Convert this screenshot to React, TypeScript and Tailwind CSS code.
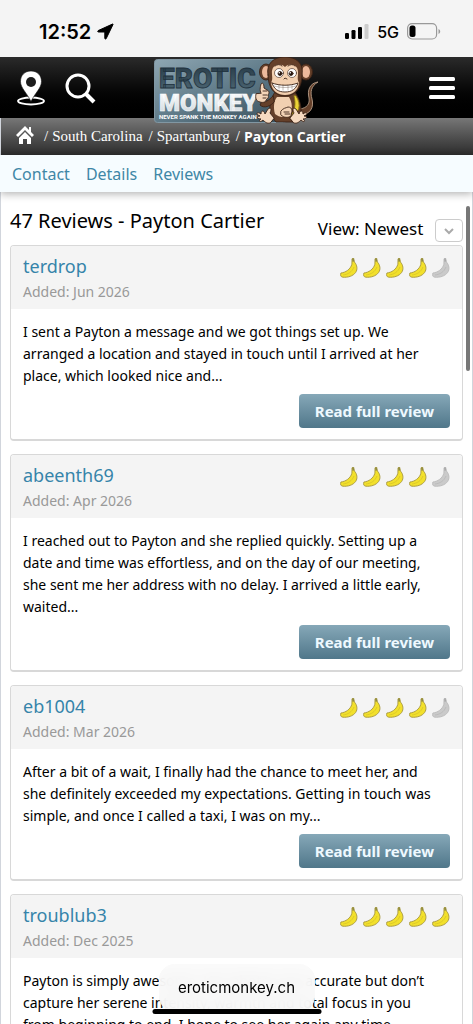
interface Review {
  author: string
  added: string
  rating: number
  text: string
}

const reviews: Review[] = [
  {
    author: "terdrop",
    added: "Jun 2026",
    rating: 4,
    text: "I sent a Payton a message and we got things set up. We arranged a location and stayed in touch until I arrived at her place, which looked nice and...",
  },
  {
    author: "abeenth69",
    added: "Apr 2026",
    rating: 4,
    text: "I reached out to Payton and she replied quickly. Setting up a date and time was effortless, and on the day of our meeting, she sent me her address with no delay. I arrived a little early, waited...",
  },
  {
    author: "eb1004",
    added: "Mar 2026",
    rating: 4,
    text: "After a bit of a wait, I finally had the chance to meet her, and she definitely exceeded my expectations. Getting in touch was simple, and once I called a taxi, I was on my...",
  },
  {
    author: "troublub3",
    added: "Dec 2025",
    rating: 5,
    text: "Payton is simply awesome. Her photos are accurate but don’t capture her serene intensity, warmth and total focus in you from beginning to end. I hope to see her again any time...",
  },
]

function StatusBar() {
  return (
    <div className="flex h-[57px] shrink-0 items-center justify-between bg-[#f4f4f4] pt-1.5 pr-8 pl-[39px] font-['Inter',sans-serif] text-black">
      <div className="flex items-center gap-1.5">
        <span className="text-xl font-semibold">12:52</span>
        <svg viewBox="0 0 17 17" className="size-[17px]" aria-hidden="true">
          <path d="M15.6 1 1.2 7.6c-.8.4-.6 1.4.3 1.4h6.3v6.3c0 .9 1 1.1 1.4.3L16 1.5c.2-.4 0-.7-.4-.5z" stroke="#000" strokeLinejoin="round" />
        </svg>
      </div>
      <div className="flex items-center gap-2">
        <svg viewBox="0 0 24 16" className="h-4 w-6" aria-hidden="true">
          <rect x="0" y="9" width="4" height="6" rx="1.2" />
          <rect x="6.500" y="6" width="4" height="9" rx="1.2" />
          <rect x="13" y="3" width="4" height="12" rx="1.2" />
          <rect x="19.500" y="0" width="4" height="15" rx="1.2" fill="#ccc" />
        </svg>
        <span className="text-base font-medium">5G</span>
        <svg viewBox="0 0 34 17" className="h-[17px] w-[34px]" aria-hidden="true">
          <rect x=".6" y=".6" width="29" height="15.400" rx="4.500" fill="none" stroke="#999" strokeWidth="1.200" />
          <rect x="2.500" y="2.600" width="6" height="11.400" rx="2.500" />
          <path d="M31.500 6v5c1-.4 1.700-1.400 1.700-2.500S32.500 6.400 31.500 6z" fill="#999" />
        </svg>
      </div>
    </div>
  )
}

function Logo() {
  return (
    <svg viewBox="0 0 169 68" className="h-[68px] w-[169px]" role="img" aria-label="Erotic Monkey">
      <defs>
        <linearGradient id="plate" x1="0" y1="0" x2="1" y2="1">
          <stop offset="0" stopColor="#8fa7b3" />
          <stop offset=".5" stopColor="#607b89" />
          <stop offset="1" stopColor="#374d59" />
        </linearGradient>
        <linearGradient id="dark" x1="0" y1="0" x2="0" y2="1">
          <stop offset="0" stopColor="#243743" />
          <stop offset="1" stopColor="#526c7a" />
        </linearGradient>
        <linearGradient id="light" x1="0" y1="0" x2="0" y2="1">
          <stop offset="0" stopColor="#ffffff" />
          <stop offset="1" stopColor="#ccd6dc" />
        </linearGradient>
      </defs>
      <rect x="1.500" y="2.500" width="132" height="63" rx="3" fill="url(#plate)" stroke="#8197a3" />
      <g fontFamily="Roboto, sans-serif" fontWeight="900">
        <text x="6" y="31" fontSize="28" fill="url(#dark)" stroke="#1f323e" strokeWidth=".8">EROTIC</text>
        <text x="6" y="54" fontSize="24" fill="url(#light)" stroke="#fff" strokeWidth=".5">MONKEY</text>
        <text x="6" y="62" fontSize="6" fontWeight="700" fill="#fff">NEVER SPANK THE MONKEY AGAIN</text>
      </g>
      <g stroke="#3b2216" strokeWidth=".9" strokeLinejoin="round" strokeLinecap="round">
        {/* tail */}
        <path d="M146 58c12 0 15-8 13-16-2-7-1-13 6-17-8 1-11 8-9 16 1 6-2 10-9 11z" fill="#65402a" stroke="#b79d88" />
        {/* body and arms */}
        <path d="M122 35c-4 6-7 15-4 24l5 6h17l8-7c1-9-2-18-7-24z" fill="#65402a" />
        <path d="M124 40c-3 4-4 10-2 17 5 4 10 4 15 0 3-6 2-12-1-17z" fill="#f1d0b1" stroke="none" />
        <path d="M120 39c-5 5-8 7-11 5l-2 4c4 4 11 1 14-3z" fill="#65402a" />
        <path d="M108 36c-2-2 0-9 0-9 2-2 3 0 3 4l3 2c3 1 2 4 1 5 1 2 0 4-2 5 0 2-3 3-6 2-4-1-5-4-4-8z" fill="#f3d4b8" />
        <path d="M110 34h4m-4 4h4m-4 3h3" fill="none" />
        {/* banana in hand */}
        <path d="M143 39c6 9 3 18-5 20 4-6 5-12 3-20z" fill="#ecd336" stroke="#8b7716" />
        <path d="M128 54c2-3 5-3 7-4 2 0 4 1 4 4l-1 5c-3 2-7 2-10-1z" fill="#f3d4b8" />
        <path d="M131 55h5m-4 2h5" />
        {/* feet */}
        <path d="M117 66c-3 1-5-1-7-3-3 3-5 1-2-1-4 0-5-3-1-3-5-2-3-5 1-2 0-4 3-4 4 0l3-5c3-2 4 0 2 4l4 5z" fill="#f6dac1" />
        <path d="M141 66c3 1 5-1 7-3 3 3 5 1 2-1 4 0 5-3 1-3 5-2 3-5-1-2 0-4-3-4-4 0l-3-5c-3-2-4 0-2 4l-4 5z" fill="#f6dac1" />
        {/* ears */}
        <ellipse cx="113" cy="15" rx="6.500" ry="8" fill="#65402a" />
        <ellipse cx="113" cy="15" rx="4" ry="6" fill="#edb99b" stroke="none" />
        <ellipse cx="153" cy="15" rx="6.500" ry="8" fill="#65402a" />
        <ellipse cx="153" cy="15" rx="4" ry="6" fill="#edb99b" stroke="none" />
        {/* head */}
        <path d="M115 18c-2-12 6-18 17-18s19 6 17 18c0 12-6 21-17 21s-17-9-17-21z" fill="#65402a" />
        <path d="M132 10c-6-5-14-2-13 7 0 3 1 5-1 9 1 8 7 12 14 12s13-4 14-12c-2-4-1-6-1-9 1-9-7-12-13-7z" fill="#f3d0b0" stroke="none" />
        <path d="M119 26c8 3 18 3 26 0-2 6-6 9-13 9s-11-3-13-9z" fill="#fff" />
        <path d="M121 29c7 2 15 2 22 0M126 28v4m4-4v5m5-5v5m4-5v4" fill="none" strokeWidth=".3" />
        <circle cx="126" cy="16" r="4.500" fill="#fff" strokeWidth=".6" />
        <circle cx="139" cy="16" r="4.500" fill="#fff" strokeWidth=".6" />
        <circle cx="127" cy="16.500" r="2" fill="#211511" />
        <circle cx="138" cy="16.500" r="2" fill="#211511" />
        <circle cx="126.300" cy="15.700" r=".8" fill="#fff" stroke="none" />
        <circle cx="137.300" cy="15.700" r=".8" fill="#fff" stroke="none" />
        <path d="M122 9q4-3 7 0m6 0q4-3 7 0m-11 13 1-1 2 1" fill="none" />
      </g>
    </svg>
  )
}

function Header() {
  return (
    <header className="relative flex h-[61px] shrink-0 items-center justify-between bg-linear-to-b from-[#2b2b2b] to-black px-4">
      <div className="flex items-center gap-[18px]">
        <button type="button" aria-label="Locations">
          <svg viewBox="0 0 30 36" className="h-9 w-[30px]">
            <ellipse cx="15" cy="31" rx="13" ry="3.500" fill="none" stroke="#fff" strokeWidth="1.800" />
            <path d="M15 31.500C11 23 4.500 18 4.500 11.500 4.500 5 9 1 15 1s10.500 4 10.500 10.500C25.500 18 19 23 15 31.500z" fill="#fff" stroke="#111" strokeWidth=".6" />
            <circle cx="15" cy="12" r="5" fill="#1c1c1c" />
          </svg>
        </button>
        <button type="button" aria-label="Search">
          <svg viewBox="0 0 32 32" className="size-8" fill="none" stroke="#fff">
            <circle cx="14" cy="14" r="11" strokeWidth="3" />
            <path d="m22 22 8 8" strokeWidth="4" />
          </svg>
        </button>
      </div>
      <a href="#home" className="absolute top-0 left-1/2 -ml-[84px]">
        <Logo />
      </a>
      <button type="button" aria-label="Menu" className="mr-0.5">
        <svg viewBox="0 0 26 24" className="h-6 w-[26px]" fill="#fff">
          <rect x="0" y="1" width="26" height="4" rx="1.500" />
          <rect x="0" y="10" width="26" height="4" rx="1.500" />
          <rect x="0" y="19" width="26" height="4" rx="1.500" />
        </svg>
      </button>
    </header>
  )
}

function Breadcrumb() {
  return (
    <nav className="flex h-[37px] shrink-0 items-center gap-1 border-l border-gray-300 bg-linear-to-b from-[#777] to-[#2d2d2d] pl-[15px] font-['Liberation_Serif',serif] text-[15px] text-white">
      <a href="#home" aria-label="Home" className="mr-1.5 mb-1">
        <svg viewBox="0 0 18 18" className="size-[18px]" fill="#fff">
          <path d="M9 0 0 9l2 2 7-7 7 7 2-2-3-3V1h-2v3z" />
          <path d="m9 6-6 6v6h4v-5h4v5h4v-6z" />
        </svg>
      </a>
      <span>/</span>
      <a href="#south-carolina">South Carolina</a>
      <span className="ml-0.5">/</span>
      <a href="#spartanburg">Spartanburg</a>
      <span className="ml-0.5">/</span>
      <span className="font-['Open_Sans',sans-serif] text-sm font-bold">Payton Cartier</span>
    </nav>
  )
}

function Tabs() {
  return (
    <nav className="relative flex h-[37px] shrink-0 items-center gap-4 bg-[#f6fcff] px-3 text-base text-[#3f87a6] shadow-[0_2px_8px_rgba(0,0,0,0.3)]">
      <a href="#contact">Contact</a>
      <a href="#details">Details</a>
      <a href="#reviews">Reviews</a>
    </nav>
  )
}

function Banana({ filled }: { filled: boolean }) {
  return (
    <svg viewBox="0 0 18 20" className="h-5 w-[18px]" aria-hidden="true">
      <path
        d="M12 .8 13.700.3l.7 3.700c2.800 3 3.400 7.500 1.200 10.500-2.500 3.500-7.600 5.200-12.800 4.700C.8 19 .1 17.500.9 15c4.600-.5 9.500-3.500 11-8.800z"
        fill={filled ? "#f2e02c" : "#cacaca"}
        stroke={filled ? "#a6963c" : "#bababa"}
        strokeWidth=".9"
        strokeLinejoin="round"
      />
      <path d="M3 17c5-.6 9-3 11-8" fill="none" stroke={filled ? "#d8c428" : "#b8b8b8"} strokeWidth=".8" />
      <path d="m12 .8 1.700-.5.5 3-1.600.7z" fill={filled ? "#8f8a44" : "#aaa"} />
    </svg>
  )
}

function ReviewCard({ review }: { review: Review }) {
  return (
    <article className="shrink-0 overflow-hidden rounded border border-b-2 border-[#d8d8d8] bg-white">
      <div className="flex h-[63px] items-start justify-between bg-[#f4f4f4] px-3 pt-[7px]">
        <div>
          <a href="#author" className="block text-lg leading-[26px] text-[#3684aa]">
            {review.author}
          </a>
          <p className="text-sm leading-[26px] text-[#999]">Added: {review.added}</p>
        </div>
        <div className="flex gap-[5px] pt-[5px]" role="img" aria-label={`${review.rating} out of 5`}>
          {[1, 2, 3, 4, 5].map((n) => (
            <Banana key={n} filled={n <= review.rating} />
          ))}
        </div>
      </div>
      <div className="px-3 pt-3 pb-[11px]">
        <p className="pr-2 text-sm leading-[22px]">{review.text}</p>
        <div className="mt-[7px] flex justify-end">
          <button
            type="button"
            className="h-[34px] rounded bg-linear-to-b from-[#86a8b8] to-[#50778a] px-4 text-[15px] font-bold text-[#eef9ff]"
          >
            Read full review
          </button>
        </div>
      </div>
    </article>
  )
}

export default function App() {
  return (
    <div className="relative flex h-screen flex-col overflow-hidden bg-white font-['Noto_Sans',sans-serif] text-black">
      <StatusBar />
      <Header />
      <Breadcrumb />
      <Tabs />
      <main className="flex min-h-0 flex-1 flex-col gap-[13px] overflow-hidden border-x border-gray-300 px-[9px]">
        <div className="-mb-[13px] flex h-[53px] shrink-0 items-start justify-between pt-3.5">
          <h1 className="text-xl leading-[30px]">47 Reviews - Payton Cartier</h1>
          <div className="flex items-center pt-[11px] text-[17px] leading-6">
            <label htmlFor="sort">View:&nbsp;</label>
            <div className="relative">
              <select id="sort" className="appearance-none bg-transparent pr-[39px]">
                <option>Newest</option>
                <option>Oldest</option>
              </select>
              <span className="pointer-events-none absolute top-0.5 right-0 flex h-[23px] w-7 items-center justify-center rounded-sm border border-[#ccc] bg-white">
                <svg viewBox="0 0 10 8" className="h-2 w-2.5" fill="none" stroke="#aaa" strokeWidth="2">
                  <path d="m1 2 4 4 4-4" />
                </svg>
              </span>
            </div>
          </div>
        </div>
        {reviews.map((review) => (
          <ReviewCard key={review.author} review={review} />
        ))}
      </main>
      <div className="absolute top-[206px] right-[3px] h-[165px] w-1 rounded-full bg-[#777]" />
      <div className="absolute bottom-3 left-1/2 flex h-12 w-[156px] -translate-x-1/2 items-center justify-center rounded-2xl bg-[#fafafa]/90 font-['Inter',sans-serif] text-[15px] backdrop-blur-sm">
        eroticmonkey.ch
      </div>
      <div className="absolute bottom-2.5 left-1/2 h-[5px] w-[169px] -translate-x-1/2 rounded-full bg-black" />
    </div>
  )
}
